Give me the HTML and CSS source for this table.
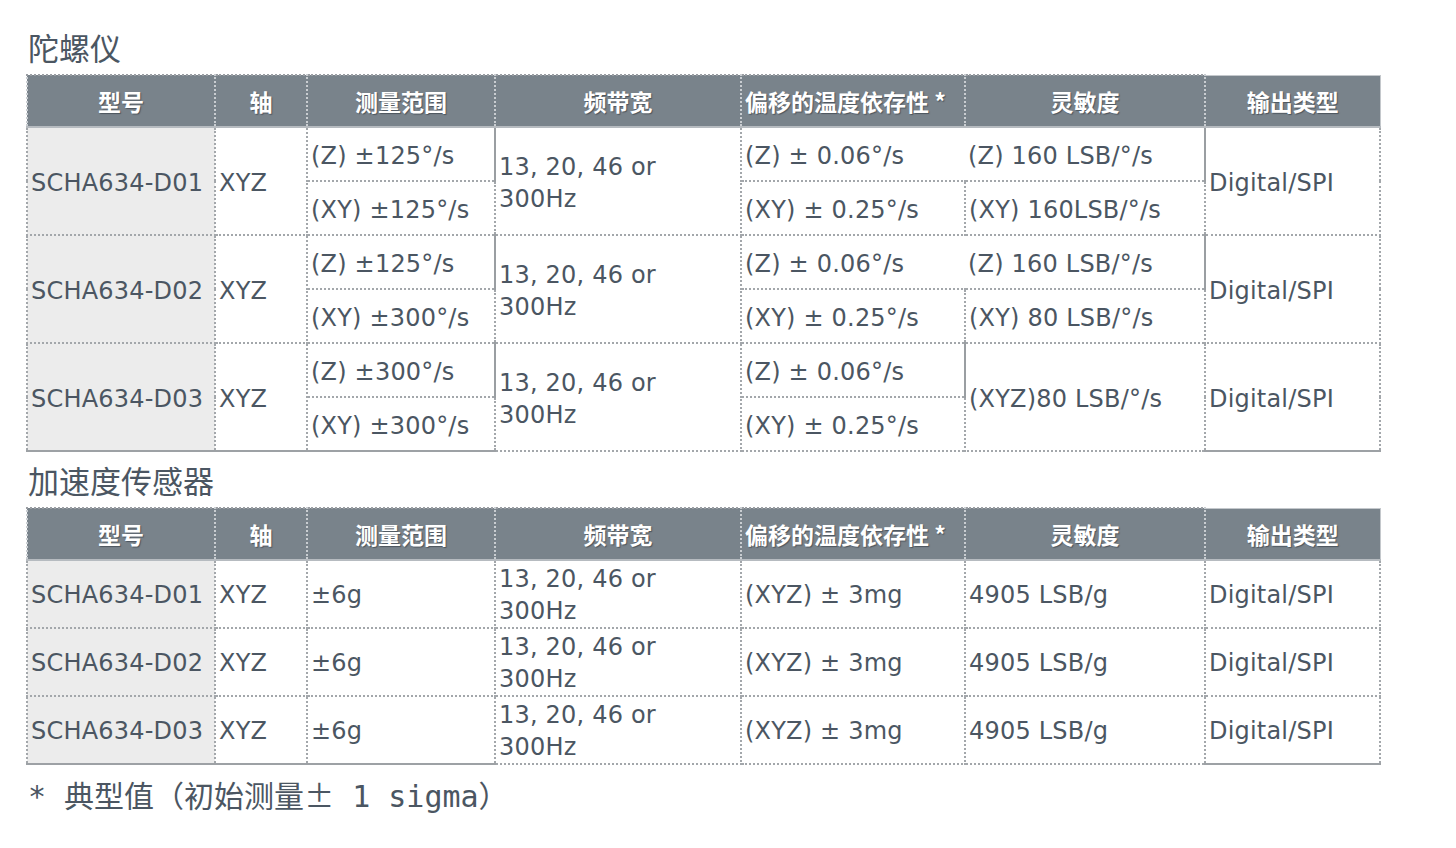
FILE: index.html
```html
<!DOCTYPE html>
<html lang="zh-CN">
<head>
<meta charset="utf-8">
<title>陀螺仪 / 加速度传感器</title>
<link rel="stylesheet" href="styles.css">
</head>
<body>
<h2 class="title">陀螺仪</h2>
<table class="spec">
  <colgroup>
    <col class="c1"><col class="c2"><col class="c3"><col class="c4"><col class="c5"><col class="c6"><col class="c7">
  </colgroup>
  <thead>
    <tr class="head">
      <th>型号</th><th>轴</th><th>测量范围</th><th>频带宽</th><th class="left">偏移的温度依存性 *</th><th>灵敏度</th><th class="last">输出类型</th>
    </tr>
  </thead>
  <tbody>
    <tr class="sub">
      <td rowspan="2" class="model">SCHA634-D01</td>
      <td rowspan="2">XYZ</td>
      <td class="sr">(Z) ±125°/s</td>
      <td rowspan="2">13, 20, 46 or<br>300Hz</td>
      <td class="hr">(Z) ± 0.06°/s</td>
      <td class="hl sr">(Z) 160 LSB/°/s</td>
      <td rowspan="2" class="last">Digital/SPI</td>
    </tr>
    <tr class="sub">
      <td>(XY) ±125°/s</td>
      <td>(XY) ± 0.25°/s</td>
      <td>(XY) 160LSB/°/s</td>
    </tr>
    <tr class="sub">
      <td rowspan="2" class="model">SCHA634-D02</td>
      <td rowspan="2">XYZ</td>
      <td class="sr">(Z) ±125°/s</td>
      <td rowspan="2">13, 20, 46 or<br>300Hz</td>
      <td class="hr">(Z) ± 0.06°/s</td>
      <td class="hl sr">(Z) 160 LSB/°/s</td>
      <td rowspan="2" class="last">Digital/SPI</td>
    </tr>
    <tr class="sub">
      <td>(XY) ±300°/s</td>
      <td>(XY) ± 0.25°/s</td>
      <td>(XY) 80 LSB/°/s</td>
    </tr>
    <tr class="sub">
      <td rowspan="2" class="model sb">SCHA634-D03</td>
      <td rowspan="2" class="sb">XYZ</td>
      <td class="sr">(Z) ±300°/s</td>
      <td rowspan="2">13, 20, 46 or<br>300Hz</td>
      <td class="sr">(Z) ± 0.06°/s</td>
      <td rowspan="2">(XYZ)80 LSB/°/s</td>
      <td rowspan="2" class="last sb">Digital/SPI</td>
    </tr>
    <tr class="sub">
      <td class="sb">(XY) ±300°/s</td>
      <td>(XY) ± 0.25°/s</td>
    </tr>
  </tbody>
</table>

<h2 class="title">加速度传感器</h2>
<table class="spec">
  <colgroup>
    <col class="c1"><col class="c2"><col class="c3"><col class="c4"><col class="c5"><col class="c6"><col class="c7">
  </colgroup>
  <thead>
    <tr class="head">
      <th>型号</th><th>轴</th><th>测量范围</th><th>频带宽</th><th class="left">偏移的温度依存性 *</th><th>灵敏度</th><th class="last">输出类型</th>
    </tr>
  </thead>
  <tbody>
    <tr class="acc">
      <td class="model">SCHA634-D01</td><td>XYZ</td><td>±6g</td><td>13, 20, 46 or<br>300Hz</td><td>(XYZ) ± 3mg</td><td>4905 LSB/g</td><td class="last">Digital/SPI</td>
    </tr>
    <tr class="acc">
      <td class="model">SCHA634-D02</td><td>XYZ</td><td>±6g</td><td>13, 20, 46 or<br>300Hz</td><td>(XYZ) ± 3mg</td><td>4905 LSB/g</td><td class="last">Digital/SPI</td>
    </tr>
    <tr class="acc">
      <td class="model sb">SCHA634-D03</td><td class="sb">XYZ</td><td class="sb">±6g</td><td>13, 20, 46 or<br>300Hz</td><td>(XYZ) ± 3mg</td><td>4905 LSB/g</td><td class="last sb">Digital/SPI</td>
    </tr>
  </tbody>
</table>
<p class="note">* 典型值（初始测量<span class="cjk">±</span> 1 sigma）</p>
</body>
</html>
```

FILE: styles.css
```css
html, body {
  margin: 0;
  background: #ffffff;
}

body {
  padding: 19px 0 0 26px;
  color: #4b5662;
  font-family: "DejaVu Sans", "Noto Sans CJK SC", sans-serif;
}

.title {
  margin: 0;
  padding-left: 2px;
  font-family: "Noto Sans CJK SC", sans-serif;
  font-weight: normal;
  font-size: 31px;
  line-height: 55px;
  color: #4b5662;
}

.spec {
  width: 1353px;
  table-layout: fixed;
  border-collapse: collapse;
}

.c1 { width: 188px; }
.c2 { width: 92px; }
.c3 { width: 188px; }
.c4 { width: 246px; }
.c5 { width: 224px; }
.c6 { width: 240px; }
.c7 { width: 175px; }

.head th {
  height: 50px;
  padding: 0;
  background: #79838b;
  color: #ffffff;
  font-family: "Noto Sans CJK SC", sans-serif;
  font-weight: bold;
  font-size: 23px;
  text-align: center;
  vertical-align: middle;
  text-shadow: 1px 1px 1px rgba(40, 48, 56, 0.55);
  border-top: 2px dotted #9a9ea3;
  border-left: 2px dotted #c9cdd1;
  border-right: 2px dotted #c9cdd1;
  border-bottom: 2px solid #b6bbc0;
}

.head th.left {
  text-align: left;
  padding-left: 3px;
}

.head th.last {
  border-right: 1px solid #c4c8cc;
  border-top: 1px solid #c4c8cc;
}

.spec td {
  padding: 3px 3px 0;
  font-size: 24px;
  line-height: 32px;
  letter-spacing: 0.2px;
  vertical-align: middle;
  white-space: nowrap;
  border: 2px dotted #a3a7ab;
}

.sub { height: 54px; }
.acc { height: 68px; }

.acc td {
  padding-top: 1px;
}

.spec td.model {
  background: #ececec;
}

.spec td.sr { border-right: 2px solid #9a9ea2; }
.spec td.hr { border-right-style: hidden; }
.spec td.hl { border-left-style: hidden; }
.spec td.sb { border-bottom: 2px solid #9da1a5; }

.note {
  margin: 0;
  padding-left: 2px;
  font-family: "DejaVu Sans Mono", "Noto Sans CJK SC", monospace;
  font-size: 30px;
  line-height: 58px;
  color: #4b5662;
}

.note .cjk {
  font-family: "Noto Sans CJK SC", sans-serif;
}
```
